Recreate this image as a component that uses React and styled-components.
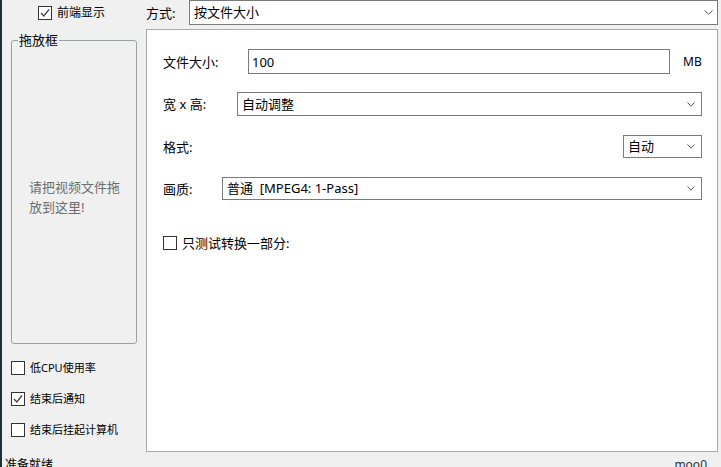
import React from 'react';
import styled, { createGlobalStyle } from 'styled-components';

const GlobalStyle = createGlobalStyle`
  html, body {
    margin: 0;
    padding: 0;
    background: #f0f0f0;
  }
  * {
    box-sizing: border-box;
  }
`;

const FONT = `"Noto Sans", "Noto Sans CJK SC", sans-serif`;

const Chevron = ({ w = 8 }) => (
  <svg width={w} height="5" viewBox={`0 0 ${w} 5`}>
    <polyline points={`0.5,0.5 ${w / 2},4.2 ${w - 0.5},0.5`} fill="none" stroke="#555" strokeWidth="1" />
  </svg>
);

const CheckMark = () => (
  <svg width="12" height="12" viewBox="0 0 12 12">
    <polyline points="2,6 4.8,9 10,2.5" fill="none" stroke="#444" strokeWidth="1.3" />
  </svg>
);

const Checkbox = ({ checked, label, size = 12 }) => (
  <CheckLabel $size={size}>
    <Box>{checked ? <CheckMark /> : null}</Box>
    <span>{label}</span>
  </CheckLabel>
);

const Combo = ({ value, width, grow, chevronRight = 6, height = 23 }) => (
  <ComboBox $width={width} $grow={grow} $pr={chevronRight} $h={height}>
    <ComboText>{value}</ComboText>
    <Chevron w={chevronRight === 6 ? 8 : 9} />
  </ComboBox>
);

const App = () => {
  return (
    <Window>
      <GlobalStyle />
      <TopBar>
        <TopLeft>
          <Checkbox checked label="前端显示" />
        </TopLeft>
        <ModeLabel>方式:</ModeLabel>
        <Combo value="按文件大小" grow chevronRight={4} height={25} />
      </TopBar>

      <Body>
        <LeftCol>
          <DropGroup>
            <legend>拖放框</legend>
            <DropArea>
              <DropHint>请把视频文件拖放到这里!</DropHint>
            </DropArea>
          </DropGroup>
          <OptionList>
            <Checkbox size={11} label="低CPU使用率" />
            <Checkbox size={11} checked label="结束后通知" />
            <Checkbox size={11} label="结束后挂起计算机" />
          </OptionList>
        </LeftCol>

        <Panel>
          <FormRow $top={0}>
            <FieldLabel $w={85}>文件大小:</FieldLabel>
            <TextInput>100</TextInput>
            <Unit>MB</Unit>
          </FormRow>
          <FormRow $top={18}>
            <FieldLabel $w={74}>宽 x 高:</FieldLabel>
            <Combo value="自动调整" grow height={24} />
          </FormRow>
          <FormRow $top={19}>
            <FieldLabel $grow>格式:</FieldLabel>
            <Combo value="自动" width={79} />
          </FormRow>
          <FormRow $top={19}>
            <FieldLabel $w={59}>画质:</FieldLabel>
            <Combo value="普通  [MPEG4: 1-Pass]" grow />
          </FormRow>
          <TestRow>
            <Checkbox size={13} label="只测试转换一部分:" />
          </TestRow>
        </Panel>
      </Body>

      <StatusBar>
        <span>准备就绪</span>
        <Brand>moo0</Brand>
      </StatusBar>
    </Window>
  );
};

const Window = styled.div`
  width: 721px;
  height: 467px;
  overflow: hidden;
  background: #f0f0f0;
  border-left: 2px solid #1d2f37;
  display: flex;
  flex-direction: column;
  font-family: ${FONT};
  font-size: 12px;
  color: #000;
`;

const TopBar = styled.div`
  flex: none;
  display: flex;
  align-items: center;
  height: 25px;
  margin-bottom: 4px;
  padding-right: 3px;
`;

const TopLeft = styled.div`
  width: 144px;
  padding-left: 36px;
`;

const ModeLabel = styled.div`
  width: 43px;
  line-height: 16px;
  font-size: 13px;
`;

const CheckLabel = styled.label`
  display: flex;
  align-items: center;
  gap: 5px;
  font-size: ${(p) => p.$size}px;
  line-height: 16px;
  white-space: nowrap;
`;

const Box = styled.span`
  width: 14px;
  height: 14px;
  border: 1px solid #333;
  background: #fff;
  display: flex;
  align-items: center;
  justify-content: center;
`;

const ComboBox = styled.div`
  display: flex;
  align-items: center;
  height: ${(p) => p.$h}px;
  width: ${(p) => (p.$width ? `${p.$width}px` : 'auto')};
  flex: ${(p) => (p.$grow ? 1 : 'none')};
  border: 1px solid #7a7a7a;
  background: #fff;
  padding: 0 ${(p) => p.$pr}px 0 4px;
`;

const ComboText = styled.span`
  flex: 1;
  font-size: 13px;
  line-height: 17px;
  white-space: pre;
`;

const Body = styled.div`
  flex: none;
  display: flex;
  height: 423px;
`;

const LeftCol = styled.div`
  width: 144px;
  display: flex;
  flex-direction: column;
  padding: 4px 0 0 9px;
`;

const DropGroup = styled.fieldset`
  width: 126px;
  height: 311px;
  margin: 0;
  padding: 0;
  border: 1px solid #9aa0a0;
  border-radius: 3px;

  legend {
    margin-left: 6px;
    padding: 0 1px;
    line-height: 14px;
    font-size: 13px;
  }
`;

const DropArea = styled.div`
  height: 296px;
  display: flex;
  align-items: center;
  justify-content: center;
  padding-top: 4px;
`;

const DropHint = styled.div`
  width: 96px;
  margin-left: 6px;
  font-size: 13px;
  line-height: 20px;
  color: #6d6d6d;
`;

const OptionList = styled.div`
  display: flex;
  flex-direction: column;
  gap: 15px;
  margin-top: 16px;
`;

const Panel = styled.div`
  flex: 1;
  margin-right: 3px;
  background: #fff;
  border: 1px solid #a7abab;
  padding: 19px 15px 0 16px;
  display: flex;
  flex-direction: column;
`;

const FormRow = styled.div`
  display: flex;
  align-items: center;
  margin-top: ${(p) => p.$top}px;
`;

const FieldLabel = styled.div`
  width: ${(p) => (p.$w ? `${p.$w}px` : 'auto')};
  flex: ${(p) => (p.$grow ? 1 : 'none')};
  font-size: 13px;
  line-height: 16px;
`;

const TextInput = styled.div`
  flex: 1;
  height: 25px;
  border: 1px solid #7a7a7a;
  padding: 0 3px;
  display: flex;
  align-items: center;
  line-height: 16px;
  font-size: 13px;
`;

const Unit = styled.div`
  width: 32px;
  padding-left: 13px;
  line-height: 16px;
  font-size: 12px;
`;

const TestRow = styled.div`
  margin-top: 35px;
`;

const StatusBar = styled.div`
  flex: none;
  display: flex;
  justify-content: space-between;
  padding: 5px 14px 0 3px;
  line-height: 16px;
`;

const Brand = styled.span`
  color: #333;
`;

export default App;
